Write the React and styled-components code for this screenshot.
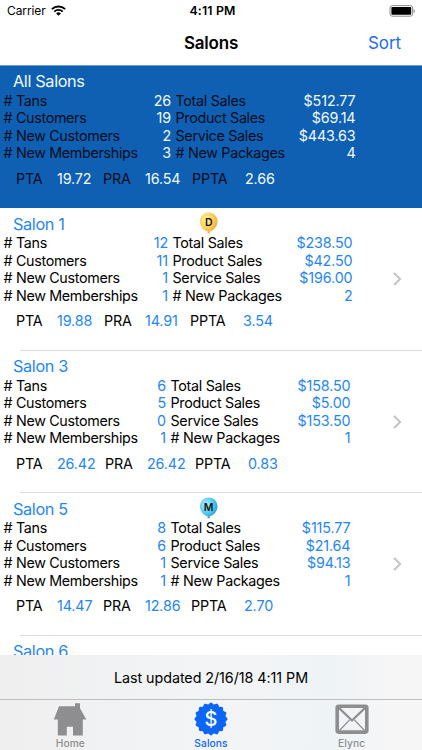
import styled, { createGlobalStyle } from "styled-components"

const GlobalStyle = createGlobalStyle`
    * {
        box-sizing: border-box;
    }
    body {
        margin: 0;
        background: #fff;
    }
`
const Screen = styled.div`
    display: flex;
    flex-direction: column;
    width: 422px;
    height: 750px;
    overflow: hidden;
    background: #fff;
    color: #000;
    font-family: Inter, "Liberation Sans", sans-serif;
    font-size: 14.3px;
    white-space: nowrap;
`
const StatusBar = styled.div`
    display: grid;
    grid-template-columns: 1fr auto 1fr;
    align-items: center;
    flex: none;
    height: 21px;
    padding: 0 7px;
    font-size: 12px;
`
const Carrier = styled.div`
    display: flex;
    align-items: center;
    gap: 5px;
    letter-spacing: -0.1px;
`
const Clock = styled.div`
    padding-left: 3px;
    font-weight: 600;
    font-size: 12.3px;
    letter-spacing: 0.15px;
`
const BatteryBox = styled.div`
    display: flex;
    justify-content: flex-end;
`
const NavBar = styled.header`
    display: grid;
    grid-template-columns: 1fr auto 1fr;
    align-items: center;
    flex: none;
    height: 44.5px;
    padding: 1px 21px 0;
    border-bottom: 1px solid #6a9bcb;
`
const Title = styled.h1`
    margin: 0;
    font-size: 17px;
    font-weight: 600;
    letter-spacing: -0.2px;
`
const SortButton = styled.button`
    justify-self: end;
    padding: 0;
    border: 0;
    background: none;
    color: #1f6df0;
    font: inherit;
    font-size: 17px;
    letter-spacing: -0.1px;
`
const List = styled.main`
    flex: 1;
    min-height: 0;
    overflow: hidden;
`
const Cell = styled.section`
    display: flex;
    height: 142.5px;
    background: ${({ $selected }) => ($selected ? "#0f60b2" : "#fff")};
    --value: ${({ $selected }) => ($selected ? "#f0faff" : "#1f86f3")};
    --label: ${({ $selected }) => ($selected ? "#020c1c" : "#000")};
    color: var(--label);
`
const CellBody = styled.div`
    flex: none;
    width: 386px;
`
const CellHead = styled.div`
    display: flex;
    align-items: flex-start;
    height: 26.3px;
    padding: 5.5px 0 0 13px;
`
const SalonName = styled.h2`
    margin: 0;
    width: 186px;
    color: var(--value);
    font-size: 16.3px;
    font-weight: 400;
    line-height: 20px;
    letter-spacing: -0.36px;
`
const Stats = styled.div`
    display: grid;
    grid-template-columns: ${({ $edge }) => $edge - 3.5}px 4.5px 180px;
    padding-left: 3.5px;
    line-height: 17.4px;
`
const StatColumn = styled.div`
    display: flex;
    flex-direction: column;
`
const Spacer = styled.div``
const Stat = styled.div`
    display: flex;
    justify-content: space-between;
    letter-spacing: ${({ $tight }) => $tight || 0}px;
`
const Value = styled.span`
    color: var(--value);
    letter-spacing: -0.12px;
`
const Averages = styled.div`
    display: grid;
    grid-template-columns: ${({ $columns }) => $columns};
    padding: 8.2px 0 0 16px;
    line-height: 17.4px;
    letter-spacing: -0.15px;
`
const Disclosure = styled.div`
    display: flex;
    align-items: center;
    padding-left: 7px;
`
const Separator = styled.div`
    height: 1px;
    margin: -1px 0 0 20px;
    background: #dcdce0;
`
const Footer = styled.footer`
    flex: none;
    height: 95px;
    background: linear-gradient(90deg, #efeff0 0%, #f1f2f3 30%, #f3f4f5 55%, #eef3f6 78%, #f6f6f7 92%);
`
const Updated = styled.div`
    display: flex;
    align-items: center;
    justify-content: center;
    height: 45px;
    padding-top: 1px;
    border-bottom: 1px solid #bdbdc0;
    letter-spacing: -0.05px;
`
const TabBar = styled.nav`
    display: grid;
    grid-template-columns: repeat(3, 1fr);
    height: 50px;
`
const Tab = styled.div`
    display: flex;
    flex-direction: column;
    align-items: center;
    padding-top: 2px;
    color: ${({ $active }) => ($active ? "#0b66f5" : "#8e8e90")};
    font-size: 10.2px;
    font-weight: 500;
    line-height: 12px;
    letter-spacing: 0.1px;

    svg {
        display: block;
        margin-bottom: 0.5px;
    }
`

const salons = [
    {
        name: "All Salons", selected: true, edge: 171,
        counts: ["26", "19", "2", "3"],
        sales: ["$512.77", "$69.14", "$443.63", "4"],
        averages: ["19.72", "16.54", "2.66"],
        columns: "41px 46px 42px 47px 53px auto",
    },
    {
        name: "Salon 1", badge: "D", edge: 168,
        counts: ["12", "11", "1", "1"],
        sales: ["$238.50", "$42.50", "$196.00", "2"],
        averages: ["19.88", "14.91", "3.54"],
        columns: "41px 47px 41px 45px 53px auto",
    },
    {
        name: "Salon 3", edge: 166,
        counts: ["6", "5", "0", "1"],
        sales: ["$158.50", "$5.00", "$153.50", "1"],
        averages: ["26.42", "26.42", "0.83"],
        columns: "41px 48px 42px 48px 53px auto",
    },
    {
        name: "Salon 5", badge: "M", edge: 166,
        counts: ["8", "6", "1", "1"],
        sales: ["$115.77", "$21.64", "$94.13", "1"],
        averages: ["14.47", "12.86", "2.70"],
        columns: "41px 46px 42px 46px 53px auto",
    },
]

const countLabels = ["# Tans", "# Customers", "# New Customers", "# New Memberships"]
const salesLabels = ["Total Sales", "Product Sales", "Service Sales", "# New Packages"]
const averageLabels = ["PTA", "PRA", "PPTA"]

const WifiIcon = () => (
    <svg width="15" height="11" viewBox="0 0 15 11">
        <path d="M.9 4.1a9.4 9.4 0 0 1 13.2 0" fill="none" stroke="#000" strokeWidth="2" />
        <path d="M3.3 6.6a6 6 0 0 1 8.4 0" fill="none" stroke="#000" strokeWidth="1.9" />
        <path d="M7.5 10.8 5.1 8.4a3.4 3.4 0 0 1 4.8 0z" />
    </svg>
)

const BatteryIcon = () => (
    <svg width="27" height="12" viewBox="0 0 27 12">
        <rect x="2" y=".6" width="22.6" height="10.6" rx="2.4" fill="#fff" stroke="#8c8c8c" />
        <rect x="3.4" y="2" width="19.8" height="7.8" rx="1" />
        <path d="M25.6 4v4q1.3-.5 1.3-2t-1.3-2" fill="#8c8c8c" />
    </svg>
)

const BalloonIcon = styled.svg`
    flex: none;
    margin-top: -1.5px;
`

const Balloon = ({ letter }) => {
    const colors = letter === "D" ? ["#fff3a0", "#fbcb50", "#ee9f30"] : ["#b5f2ff", "#4cc6ef", "#1a90c8"]
    return (
        <BalloonIcon width="20" height="22" viewBox="0 0 20 22">
            <defs>
                <radialGradient id={`balloon-${letter}`} cx=".35" cy=".35" r=".75">
                    <stop offset="0" stopColor={colors[0]} />
                    <stop offset=".6" stopColor={colors[1]} />
                    <stop offset="1" stopColor={colors[2]} />
                </radialGradient>
            </defs>
            <path
                d="M9.7.4c5.100 0 8.800 3.900 8.800 9 0 4.800-3.800 8.900-8 10.100l.6 1.700H8.300l.6-1.700C4.700 18.300.9 14.200.9 9.400.9 4.300 4.600.4 9.700.4z"
                fill={`url(#balloon-${letter})`}
            />
            <text x="9.7" y="14" textAnchor="middle" fontSize="10.500" fontWeight="600" fill="#111">{letter}</text>
        </BalloonIcon>
    )
}

const Chevron = () => (
    <svg width="9" height="14" viewBox="0 0 9 14">
        <path d="m1.1 1 6 6-6 6" fill="none" stroke="#c3c3c8" strokeWidth="2" />
    </svg>
)

const HouseIcon = () => (
    <svg width="34" height="34" viewBox="0 0 34 34" fill="#8e8e90">
        <path d="M6 4.200h16V1.200h5v5l6.300 11.300h-3.500v16H20v-8.800h-6.200v8.800H4.800v-16H.8z" />
    </svg>
)

const sealPoints = Array.from({ length: 96 }, (_, i) => {
    const angle = (i / 96) * Math.PI * 2
    const radius = 15.7 + Math.cos(angle * 16) * 0.9
    return `${17 + Math.sin(angle) * radius},${17 - Math.cos(angle) * radius}`
}).join(" ")

const SealIcon = () => (
    <svg width="34" height="34" viewBox="0 0 34 34">
        <polygon points={sealPoints} fill="#0b66f5" />
        <text x="17" y="24.2" textAnchor="middle" fontSize="20" fontWeight="500" fill="#fff">$</text>
    </svg>
)

const EnvelopeIcon = () => (
    <svg width="34" height="34" viewBox="0 0 34 34" fill="none" stroke="#8e8e90">
        <rect x="2.2" y="4.3" width="29.6" height="25.8" rx="1.5" strokeWidth="3.6" />
        <path d="m4 6 13 12.500L30 6" strokeWidth="2.3" />
        <path d="m4 29 10.500-11M30 29 19.500 18" strokeWidth="1.1" />
    </svg>
)

const SalonCell = ({ salon }) => (
    <>
        <Cell $selected={salon.selected}>
            <CellBody>
                <CellHead>
                    <SalonName>{salon.name}</SalonName>
                    {salon.badge && <Balloon letter={salon.badge} />}
                </CellHead>
                {salon.counts && (
                    <>
                        <Stats $edge={salon.edge}>
                            <StatColumn>
                                {countLabels.map((label, i) => (
                                    <Stat key={label} $tight={-0.32}>{label}<Value>{salon.counts[i]}</Value></Stat>
                                ))}
                            </StatColumn>
                            <Spacer />
                            <StatColumn>
                                {salesLabels.map((label, i) => (
                                    <Stat key={label} $tight={-0.3}>{label}<Value>{salon.sales[i]}</Value></Stat>
                                ))}
                            </StatColumn>
                        </Stats>
                        <Averages $columns={salon.columns}>
                            {averageLabels.map((label, i) => [
                                <span key={label}>{label}</span>,
                                <Value key={`${label}-value`}>{salon.averages[i]}</Value>,
                            ])}
                        </Averages>
                    </>
                )}
            </CellBody>
            {salon.counts && !salon.selected && <Disclosure><Chevron /></Disclosure>}
        </Cell>
        {!salon.selected && <Separator />}
    </>
)

const App = () => {
    return (
        <Screen>
            <GlobalStyle />
            <StatusBar>
                <Carrier>Carrier <WifiIcon /></Carrier>
                <Clock>4:11 PM</Clock>
                <BatteryBox><BatteryIcon /></BatteryBox>
            </StatusBar>
            <NavBar>
                <span />
                <Title>Salons</Title>
                <SortButton>Sort</SortButton>
            </NavBar>
            <List>
                {salons.map((salon) => <SalonCell key={salon.name} salon={salon} />)}
                <SalonCell salon={{ name: "Salon 6" }} />
            </List>
            <Footer>
                <Updated>Last updated 2/16/18 4:11 PM</Updated>
                <TabBar>
                    <Tab><HouseIcon />Home</Tab>
                    <Tab $active><SealIcon />Salons</Tab>
                    <Tab><EnvelopeIcon />Elync</Tab>
                </TabBar>
            </Footer>
        </Screen>
    )
}

export default App
